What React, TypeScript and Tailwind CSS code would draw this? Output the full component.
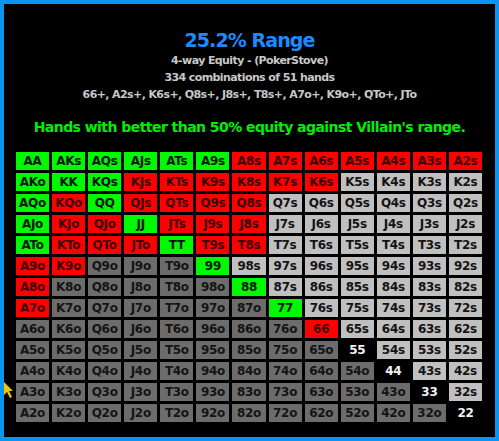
const RANKS = ["A", "K", "Q", "J", "T", "9", "8", "7", "6", "5", "4", "3", "2"];

// hands in villain's range that beat it (green), the rest of the range is red
const GREEN = new Set(["AA", "KK", "QQ", "JJ", "TT", "99", "88", "77", "AKs", "AQs", "AJs", "ATs", "A9s", "KQs", "AKo", "AQo", "AJo", "ATo"]);
const RANGE = new Set([
  "66",
  "A8s", "A7s", "A6s", "A5s", "A4s", "A3s", "A2s",
  "KJs", "KTs", "K9s", "K8s", "K7s", "K6s",
  "QJs", "QTs", "Q9s", "Q8s",
  "JTs", "J9s", "J8s",
  "T9s", "T8s",
  "KQo", "KJo", "KTo", "K9o", "QJo", "QTo", "JTo",
  "A9o", "A8o", "A7o",
]);

type Cell = { label: string; cls: string };

function buildCells(): Cell[] {
  const out: Cell[] = [];
  for (let i = 0; i < 13; i++) {
    for (let j = 0; j < 13; j++) {
      let label: string;
      let kind: "pair" | "s" | "o";
      if (i === j) {
        label = RANKS[i] + RANKS[j];
        kind = "pair";
      } else if (j > i) {
        label = RANKS[i] + RANKS[j] + "s";
        kind = "s";
      } else {
        label = RANKS[j] + RANKS[i] + "o";
        kind = "o";
      }
      let cls: string;
      if (GREEN.has(label)) cls = "bg-[#00f800] text-[#0a140a]";
      else if (RANGE.has(label)) cls = "bg-[#ff0000] text-[#3a0000]";
      else if (kind === "pair") cls = "bg-black text-[#f0f0f0]";
      else if (kind === "s") cls = "bg-[#c0c0c0] text-[#141414]";
      else cls = "bg-[#6c6c6c] text-[#141414]";
      out.push({ label, cls });
    }
  }
  return out;
}

export default function App() {
  const cells = buildCells();
  return (
    <div className="relative h-[441px] w-[499px] border-4 border-[#0a95f2] bg-black font-['DejaVu_Sans',Verdana,sans-serif] font-bold">
      <div className="flex flex-col items-center pt-[24px]">
        <h1 className="text-[19px] leading-[24px] tracking-[-0.9px] text-[#1a8cff]">25.2% Range</h1>
        <div className="flex flex-col items-center text-[11px] leading-[17px] tracking-[-0.6px] text-[#c8c8c8]">
          <p>4-way Equity - (PokerStove)</p>
          <p>334 combinations of 51 hands</p>
          <p>66+, A2s+, K6s+, Q8s+, J8s+, T8s+, A7o+, K9o+, QTo+, JTo</p>
        </div>
        <p className="mt-[15px] text-[14px] leading-[18px] tracking-[-0.55px] text-[#00f000]">
          Hands with better than 50% equity against Villain's range.
        </p>
      </div>

      <div className="ml-[12px] mt-[16px] grid w-[466px] grid-cols-13 gap-[3px]">
        {cells.map((c) => (
          <div key={c.label} className={`flex h-[18px] items-center justify-center text-[12px] leading-none tracking-[-0.3px] ${c.cls}`}>
            {c.label}
          </div>
        ))}
      </div>

      {/* mouse pointer peeking in at the left edge */}
      <svg className="absolute left-0 top-[378px]" width="10" height="16" viewBox="0 0 10 16">
        <polygon points="0,0 9,9 5,9 8,15 6,16 3,10 0,13" fill="#f5c400" />
      </svg>
    </div>
  );
}
